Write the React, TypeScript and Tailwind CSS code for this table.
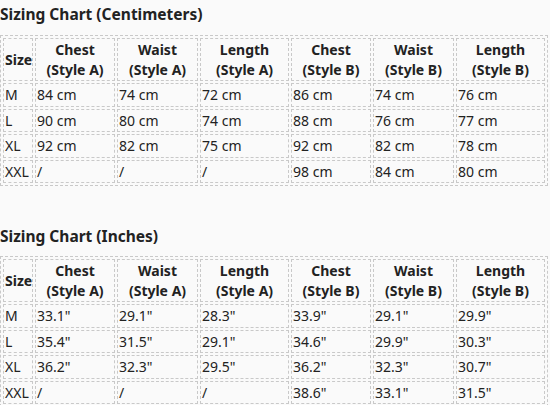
import React from "react";

type Row = {
  size: string;
  values: string[];
};

const cmRows: Row[] = [
  { size: "M", values: ["84 cm", "74 cm", "72 cm", "86 cm", "74 cm", "76 cm"] },
  { size: "L", values: ["90 cm", "80 cm", "74 cm", "88 cm", "76 cm", "77 cm"] },
  { size: "XL", values: ["92 cm", "82 cm", "75 cm", "92 cm", "82 cm", "78 cm"] },
  { size: "XXL", values: ["/", "/", "/", "98 cm", "84 cm", "80 cm"] },
];

const inchRows: Row[] = [
  { size: "M", values: ['33.1"', '29.1"', '28.3"', '33.9"', '29.1"', '29.9"'] },
  { size: "L", values: ['35.4"', '31.5"', '29.1"', '34.6"', '29.9"', '30.3"'] },
  { size: "XL", values: ['36.2"', '32.3"', '29.5"', '36.2"', '32.3"', '30.7"'] },
  { size: "XXL", values: ["/", "/", "/", '38.6"', '33.1"', '31.5"'] },
];

const headers = [
  { name: "Chest", style: "A", w: "w-[80px]" },
  { name: "Waist", style: "A", w: "w-[81px]" },
  { name: "Length", style: "A", w: "w-[89px]" },
  { name: "Chest", style: "B", w: "w-[80px]" },
  { name: "Waist", style: "B", w: "w-[81px]" },
  { name: "Length", style: "B", w: "w-[89px]" },
];

const cell = "border border-dashed border-[#c9c9c9] p-[1px] leading-[19.5px]";

const SizeTable = ({ rows }: { rows: Row[] }) => (
  <table className="w-[548px] table-fixed border-separate border-spacing-[2px] border border-dashed border-[#c9c9c9]">
    <thead>
      <tr>
        <th className={`${cell} w-[30px] text-center font-bold`}>Size</th>
        {headers.map((h, i) => (
          <th key={i} className={`${cell} ${h.w} text-center font-bold`}>
            {h.name}
            <br />
            (Style {h.style})
          </th>
        ))}
      </tr>
    </thead>
    <tbody>
      {rows.map((r) => (
        <tr key={r.size}>
          <td className={`${cell} text-left`}>{r.size}</td>
          {r.values.map((v, i) => (
            <td key={i} className={`${cell} text-left`}>
              {v}
            </td>
          ))}
        </tr>
      ))}
    </tbody>
  </table>
);

export default function App() {
  return (
    <div
      className="min-h-screen w-[550px] bg-[#fafafa] text-[14px] text-[#222]"
      style={{ fontFamily: '"Segoe UI", "Noto Sans", sans-serif' }}
    >
      {/* Centimeters */}
      <h3 className="pt-[4px] mb-[11px] text-[15.5px] font-bold leading-[20px]">
        Sizing Chart (Centimeters)
      </h3>
      <SizeTable rows={cmRows} />

      {/* Inches */}
      <h3 className="mt-[40px] mb-[10px] text-[15.5px] font-bold leading-[20px]">
        Sizing Chart (Inches)
      </h3>
      <SizeTable rows={inchRows} />
    </div>
  );
}
